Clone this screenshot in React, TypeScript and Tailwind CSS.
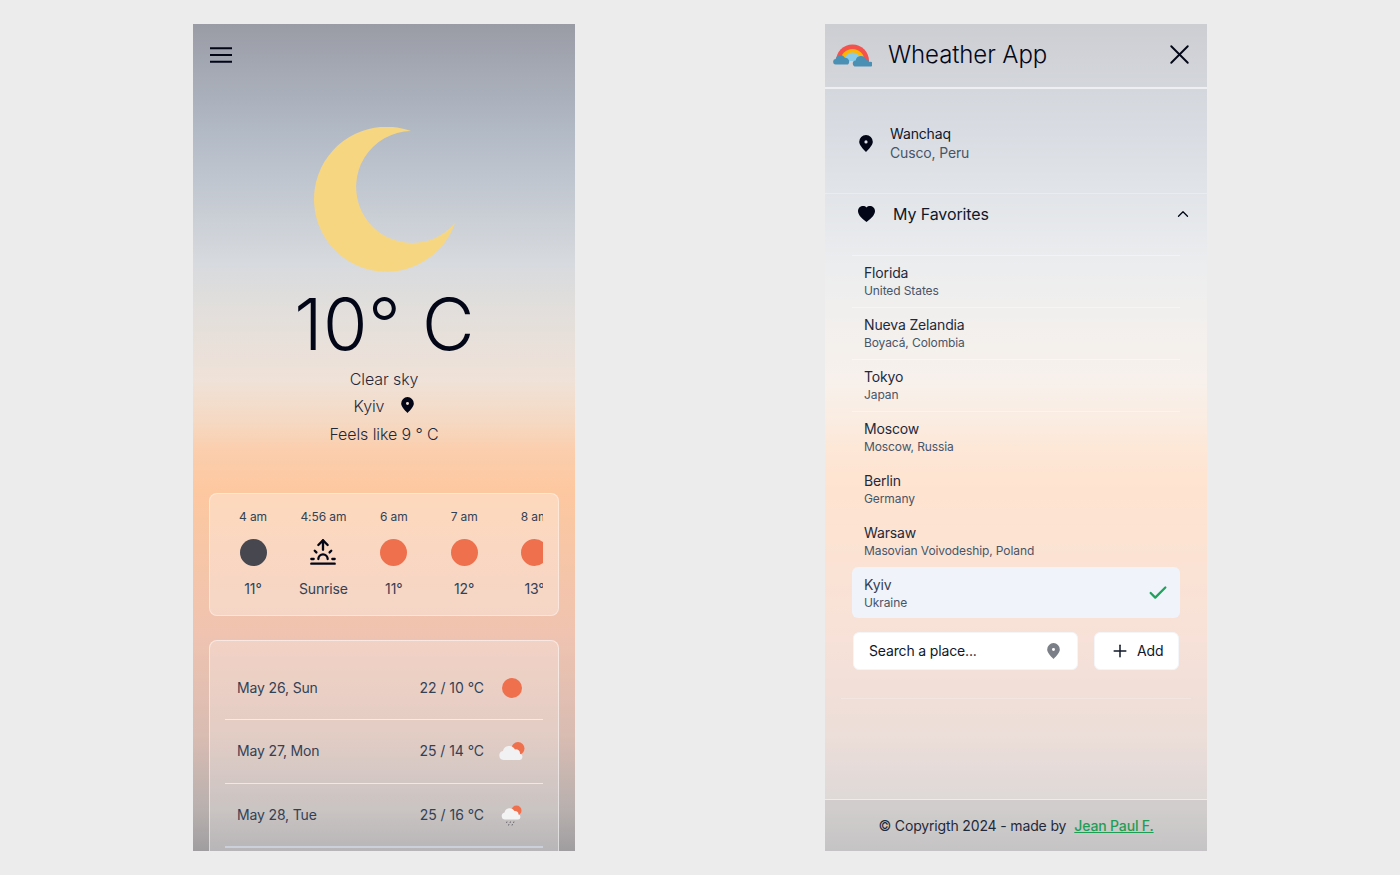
import React from 'react'
import { X, Sunrise, ChevronUp, Check, Plus } from 'lucide-react'
import { BsHeartFill } from 'react-icons/bs'

const sky =
  'bg-[linear-gradient(180deg,#9a9ca5_0%,#b2bac6_13%,#d7dade_29%,#e0dedc_33.4%,#efe2d8_43%,#f5d9c3_48%,#fbcead_51.5%,#fdc8a0_56.4%,#efc3b0_74%,#d9bcb2_86%,#b8b0ae_95%,#a09da0_100%)]'

const hours = [
  { time: '4 am', label: '11°', dark: true },
  { time: '4:56 am', label: 'Sunrise', rise: true },
  { time: '6 am', label: '11°' },
  { time: '7 am', label: '12°' },
  { time: '8 am', label: '13°' },
]

const favorites = [
  { name: 'Florida', place: 'United States' },
  { name: 'Nueva Zelandia', place: 'Boyacá, Colombia' },
  { name: 'Tokyo', place: 'Japan' },
  { name: 'Moscow', place: 'Moscow, Russia' },
  { name: 'Berlin', place: 'Germany' },
  { name: 'Warsaw', place: 'Masovian Voivodeship, Poland' },
]

const MoonIcon = () => (
  <svg viewBox="0 0 145 145" className="w-[145px] h-[145px]">
    <path d="M98 4A72.5 72.5 0 1 0 142 96A56 56 0 1 1 98 4Z" fill="#f7d682" />
  </svg>
)

const MenuIcon = () => (
  <svg viewBox="0 0 22 16" className="w-[22px] h-[16px]">
    <path d="M0 1.200H22M0 8H22M0 14.800H22" stroke="#020617" strokeWidth="2" />
  </svg>
)

const Pin = ({ className }: { className: string }) => (
  <svg viewBox="0 0 14 17" className={className}>
    <path
      fillRule="evenodd"
      d="M7 0A6.800 6.800 0 0 0 .2 6.800C.2 10 3.800 13.800 7 17C10.200 13.800 13.800 10 13.800 6.800A6.800 6.800 0 0 0 7 0ZM7 5.300A1.600 1.600 0 1 1 7 8.500A1.600 1.600 0 1 1 7 5.300Z"
      fill="currentColor"
    />
  </svg>
)

const CloudSun = () => (
  <svg viewBox="0 0 26 18" className="w-[26px] h-[18px]">
    <circle cx="19" cy="6.500" r="6.500" fill="#ef704d" />
    <path d="M4.500 18a4.500 4.500 0 0 1-.6-8.900A6.500 6.500 0 0 1 16 7.500a4 4 0 0 1 5 4.200A3.200 3.200 0 0 1 20 18Z" fill="#f1f1f3" />
  </svg>
)

const CloudRain = () => (
  <svg viewBox="0 0 22 21" className="w-[22px] h-[21px]">
    <circle cx="15.500" cy="5.500" r="5" fill="#ef704d" />
    <path d="M4 14.500a3.600 3.600 0 0 1-.5-7.100A5.400 5.400 0 0 1 13.500 6a3.300 3.300 0 0 1 4 3.400 2.600 2.600 0 0 1-.5 5.100Z" fill="#f3f3f4" />
    <path d="M6 16.500l-.5 1.500M9.500 16.500l-.5 1.500M13 16.500l-.5 1.500M8 19l-.5 1.500M11.500 19l-.5 1.500" stroke="#6b6b70" strokeWidth="1" />
  </svg>
)

const RainbowLogo = () => (
  <svg viewBox="0 0 39 24" className="w-[39px] h-[24px]">
    <path d="M3 18a16.500 16.500 0 0 1 33 0Z" fill="#f4524d" />
    <path d="M7.500 18a12 12 0 0 1 24 0Z" fill="#ffb703" />
    <path d="M11 18a8.500 8.500 0 0 1 17 0Z" fill="#8ccbe8" />
    <path d="M3 21.500a2.700 2.700 0 0 1-.4-5.400 5 5 0 0 1 9.300-1.400 4 4 0 0 1 3.100 6.800Z" fill="#4a90b5" />
    <path d="M23 23.500a3 3 0 0 1-.4-6 5.500 5.500 0 0 1 10.400-1.300 3.800 3.800 0 0 1 3.500 2.800 2.400 2.400 0 0 1 1.700 4.500Z" fill="#4a90b5" />
  </svg>
)

const WeatherPanel = () => (
  <div className={`w-[382px] h-[827px] shrink-0 overflow-hidden ${sky}`}>
    <div className="h-[63px] flex items-center pl-[17px] pb-[2px]">
      <MenuIcon />
    </div>

    <div className="flex flex-col items-center text-[#020617]">
      <div className="mt-[40px] ml-[3px]">
        <MoonIcon />
      </div>
      <div className="text-7xl leading-none font-light mt-[16px] ml-px tracking-[0.5px]">10° C</div>
      <div className="text-base font-light text-[#1e293b] mt-[6px] leading-[27px] tracking-[-0.1px]">Clear sky</div>
      <div className="flex items-center text-base font-light text-[#1e293b] leading-[27px] tracking-[-0.1px]">
        <span className="mr-[18px]">Kyiv</span>
        <Pin className="w-[13px] h-[16px] text-[#020617] -mt-[3px] -ml-px" />
      </div>
      <div className="text-base font-light text-[#1e293b] leading-[27px] mt-[1px] tracking-[-0.1px]">Feels like 9 ° C</div>
    </div>

    <div className="mx-4 mt-[45px] h-[123px] rounded-lg border border-white/40 bg-white/30 px-[15px] pt-[13px] overflow-hidden">
      <div className="flex gap-[14.4px] overflow-hidden">
        {hours.map((h) => (
          <div key={h.time} className="w-14 shrink-0 flex flex-col items-center">
            <span className="text-xs leading-5 text-[#334155] whitespace-nowrap tracking-[-0.1px]">{h.time}</span>
            <div className="h-[28px] mt-[11px] flex items-center justify-center">
              {h.rise ? (
                <Sunrise className="w-[28px] h-[28px] text-[#020617]" strokeWidth={2} />
              ) : (
                <span className={`block w-[27px] h-[27px] rounded-full ${h.dark ? 'bg-[#47474f]' : 'bg-[#ef704d]'}`} />
              )}
            </div>
            <span className="text-sm leading-5 text-[#334155] mt-[13px] whitespace-nowrap tracking-[-0.15px]">{h.label}</span>
          </div>
        ))}
      </div>
    </div>

    <div className="mx-4 mt-[24px] h-[300px] rounded-lg border border-white/50 bg-white/25 px-[15px] pt-[16px]">
      <div className="flex items-center h-[63px] border-b border-white/60 px-3 text-sm text-[#334155] tracking-[-0.15px]">
        <span className="flex-1">May 26, Sun</span>
        <span className="tracking-[-0.05px]">22 / 10 °C</span>
        <div className="w-[26px] ml-[15px] mr-[6px] flex justify-center">
          <span className="block w-5 h-5 rounded-full bg-[#ef704d]" />
        </div>
      </div>
      <div className="flex items-center h-[64px] pb-[1px] border-b border-white/60 px-3 text-sm text-[#334155] tracking-[-0.15px]">
        <span className="flex-1">May 27, Mon</span>
        <span className="tracking-[-0.05px]">25 / 14 °C</span>
        <div className="w-[26px] ml-[15px] mr-[6px] flex justify-center">
          <CloudSun />
        </div>
      </div>
      <div className="flex items-center h-[64px] border-b-2 border-[#cbd0da] px-3 text-sm text-[#334155] tracking-[-0.15px]">
        <span className="flex-1">May 28, Tue</span>
        <span className="tracking-[-0.05px]">25 / 16 °C</span>
        <div className="w-[26px] ml-[15px] mr-[6px] flex justify-center">
          <CloudRain />
        </div>
      </div>
    </div>
  </div>
)

const MenuPanel = () => (
  <div className={`w-[382px] h-[827px] shrink-0 overflow-hidden ${sky}`}>
    <div className="h-full flex flex-col bg-white/50">
      <header className="h-[65px] shrink-0 flex items-center border-b-2 border-white/60 pl-2 pr-[11px] pb-[2px] text-[#020617]">
        <RainbowLogo />
        <h1 className="ml-4 text-2xl font-light flex-1 tracking-[-0.1px]">Wheather App</h1>
        <X className="w-[33px] h-[33px]" strokeWidth={1.4} />
      </header>

      <div className="flex-1 text-[#020617]">
        <div className="h-[105px] flex items-center pl-[34px] border-b border-white/30 pt-[4px]">
          <Pin className="w-[14px] h-[17px]" />
          <div className="ml-[17px] text-sm leading-[19px] tracking-[-0.15px]">
            <div className="text-[#0f172a]">Wanchaq</div>
            <div className="text-[#475569]">Cusco, Peru</div>
          </div>
        </div>

        <div className="h-[40px] mb-[21px] flex items-center pl-[33px] pr-[15px]">
          <BsHeartFill className="w-[17px] h-[17px]" />
          <span className="ml-[18px] flex-1 text-base text-[#0f172a] tracking-[-0.1px]">My Favorites</span>
          <ChevronUp className="w-[18px] h-[18px]" strokeWidth={1.7} />
        </div>

        <div className="mx-[27px] border-t border-white/40">
          {favorites.map((f, i) => (
            <div key={f.name} className={`h-[52px] pl-3 pt-[8px] ${i < 3 ? 'border-b border-white/40' : ''}`}>
              <div className="text-sm leading-[18px] text-[#1e293b] tracking-[-0.15px]">{f.name}</div>
              <div className="text-xs leading-4 mt-px text-[#475569] tracking-[-0.1px]">{f.place}</div>
            </div>
          ))}
          <div className="h-[51px] -mt-px pl-3 pr-[11px] flex items-center rounded-md bg-[#f0f3f9]">
            <div className="flex-1 mt-[2px]">
              <div className="text-sm leading-[18px] text-[#334155] tracking-[-0.15px]">Kyiv</div>
              <div className="text-xs leading-4 mt-px text-[#475569] tracking-[-0.1px]">Ukraine</div>
            </div>
            <Check className="w-[22px] h-[22px] text-[#1fa35c]" strokeWidth={2.5} />
          </div>

          <div className="flex mt-[14px] gap-4 pl-px">
            <div className="w-[225px] h-[38px] flex items-center rounded-md border border-[#f3f5f9] bg-white pl-[15px] pr-[17px] text-sm text-[#0f172a] tracking-[-0.15px]">
              <span className="flex-1">Search a place...</span>
              <Pin className="w-[13px] h-[16px] text-[#7b7f87]" />
            </div>
            <div className="w-[85px] h-[38px] flex items-center rounded-md border border-[#f3f5f9] bg-white pl-[15px] text-sm text-[#0f172a] tracking-[-0.15px]">
              <Plus className="w-[20px] h-[20px]" strokeWidth={1.8} />
              <span className="ml-[7px]">Add</span>
            </div>
          </div>
        </div>

        <div className="mx-4 mt-[28px] border-t border-white/20" />
      </div>

      <footer className="h-[52px] shrink-0 flex items-center justify-center border-t border-white/60 bg-black/5 text-sm text-[#1e293b] tracking-[-0.15px]">
        <span>© Copyrigth 2024 - made by</span>
        <a href="#" className="ml-2 font-medium text-[#1f9d55] underline">Jean Paul F.</a>
      </footer>
    </div>
  </div>
)

export default function App() {
  return (
    <div className="min-h-screen bg-[#ececec] pt-6 flex justify-center gap-[250px] font-['Inter',sans-serif]">
      <WeatherPanel />
      <MenuPanel />
    </div>
  )
}
